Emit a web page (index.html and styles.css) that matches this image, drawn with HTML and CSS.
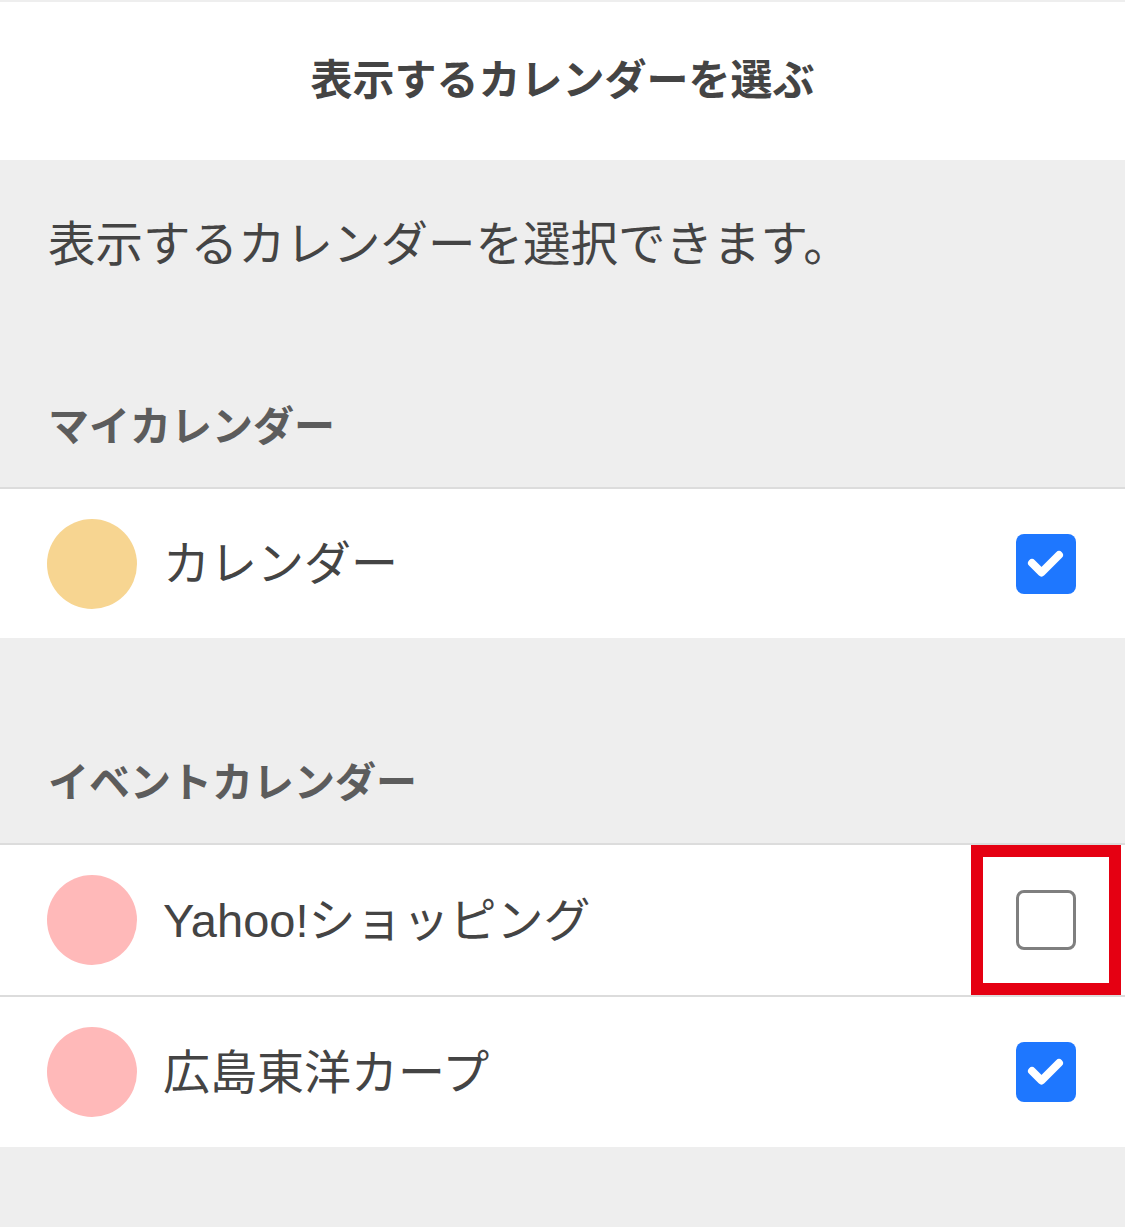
FILE: index.html
```html
<!DOCTYPE html>
<html lang="ja">
<head>
<meta charset="utf-8">
<title>表示するカレンダーを選ぶ</title>
<link rel="stylesheet" href="styles.css">
</head>
<body>
<div class="page">
  <header class="header"><h1 class="title">表示するカレンダーを選ぶ</h1></header>
  <div class="intro"><p class="intro-text">表示するカレンダーを選択できます。</p></div>

  <div class="section-head"><h2 class="section-label">マイカレンダー</h2></div>
  <ul class="list list-my">
    <li class="row">
      <span class="dot dot-yellow"></span>
      <span class="name">カレンダー</span>
      <span class="check checked">
        <svg viewBox="0 0 60 60" width="60" height="60"><path d="M16 29 L25.5 38.5 L43 21" fill="none" stroke="#fff" stroke-width="8" stroke-linecap="round" stroke-linejoin="round"/></svg>
      </span>
    </li>
  </ul>

  <div class="section-head second"><h2 class="section-label">イベントカレンダー</h2></div>
  <ul class="list">
    <li class="row">
      <span class="dot dot-pink"></span>
      <span class="name">Yahoo!ショッピング</span>
      <span class="check-wrap">
        <span class="check unchecked"></span>
        <span class="highlight"></span>
      </span>
    </li>
    <li class="row">
      <span class="dot dot-pink"></span>
      <span class="name">広島東洋カープ</span>
      <span class="check checked">
        <svg viewBox="0 0 60 60" width="60" height="60"><path d="M16 29 L25.5 38.5 L43 21" fill="none" stroke="#fff" stroke-width="8" stroke-linecap="round" stroke-linejoin="round"/></svg>
      </span>
    </li>
  </ul>
</div>
</body>
</html>
```

FILE: styles.css
```css
* { box-sizing: border-box; }
html, body { margin: 0; padding: 0; }
body {
  background: #eeeeee;
  font-family: "Liberation Sans", "Noto Sans CJK JP", "Noto Sans", sans-serif;
  color: #444;
  width: 1125px;
  height: 1227px;
  overflow: hidden;
}
.page { padding-top: 2px; }
.header {
  height: 158px;
  background: #fff;
  display: flex;
  align-items: center;
  justify-content: center;
}
.title {
  margin: 0;
  font-size: 42px;
  font-weight: 700;
  line-height: 1;
  color: #444;
}
.intro {
  height: 170px;
  display: flex;
  align-items: center;
  padding-left: 48px;
}
.intro-text {
  margin: 0;
  font-size: 47.5px;
  line-height: 1;
  color: #444;
}
.section-head {
  height: 157px;
  display: flex;
  align-items: flex-end;
  padding-left: 48px;
  padding-bottom: 40px;
}
.section-head.second { margin-top: 48px; }
.section-label {
  margin: 0;
  font-size: 41px;
  line-height: 40px;
  font-weight: 700;
  color: #5c5c5c;
}
.list { list-style: none; margin: 0; padding: 0; }
.row {
  height: 152px;
  border-top: 2px solid #dcdcdc;
  background: #fff;
  display: flex;
  align-items: center;
  padding-left: 47px;
  padding-right: 49px;
}
.list-my .row { height: 151px; }
.dot {
  width: 90px;
  height: 90px;
  border-radius: 50%;
  flex: none;
}
.dot-yellow { background: #f7d591; }
.dot-pink { background: #ffb9b9; }
.name {
  margin-left: 26px;
  font-size: 47px;
  line-height: 1;
  color: #444;
  flex: 1;
}
.check {
  width: 60px;
  height: 60px;
  border-radius: 8px;
  flex: none;
  display: block;
}
.check svg { display: block; }
.checked { background: #1e77ff; }
.unchecked { background: #fff; border: 3px solid #7f7f7f; }
.check-wrap { position: relative; width: 60px; height: 60px; flex: none; }
.highlight {
  position: absolute;
  left: -45px;
  top: -45px;
  width: 150px;
  height: 150px;
  border: 12px solid #e50012;
}
```
